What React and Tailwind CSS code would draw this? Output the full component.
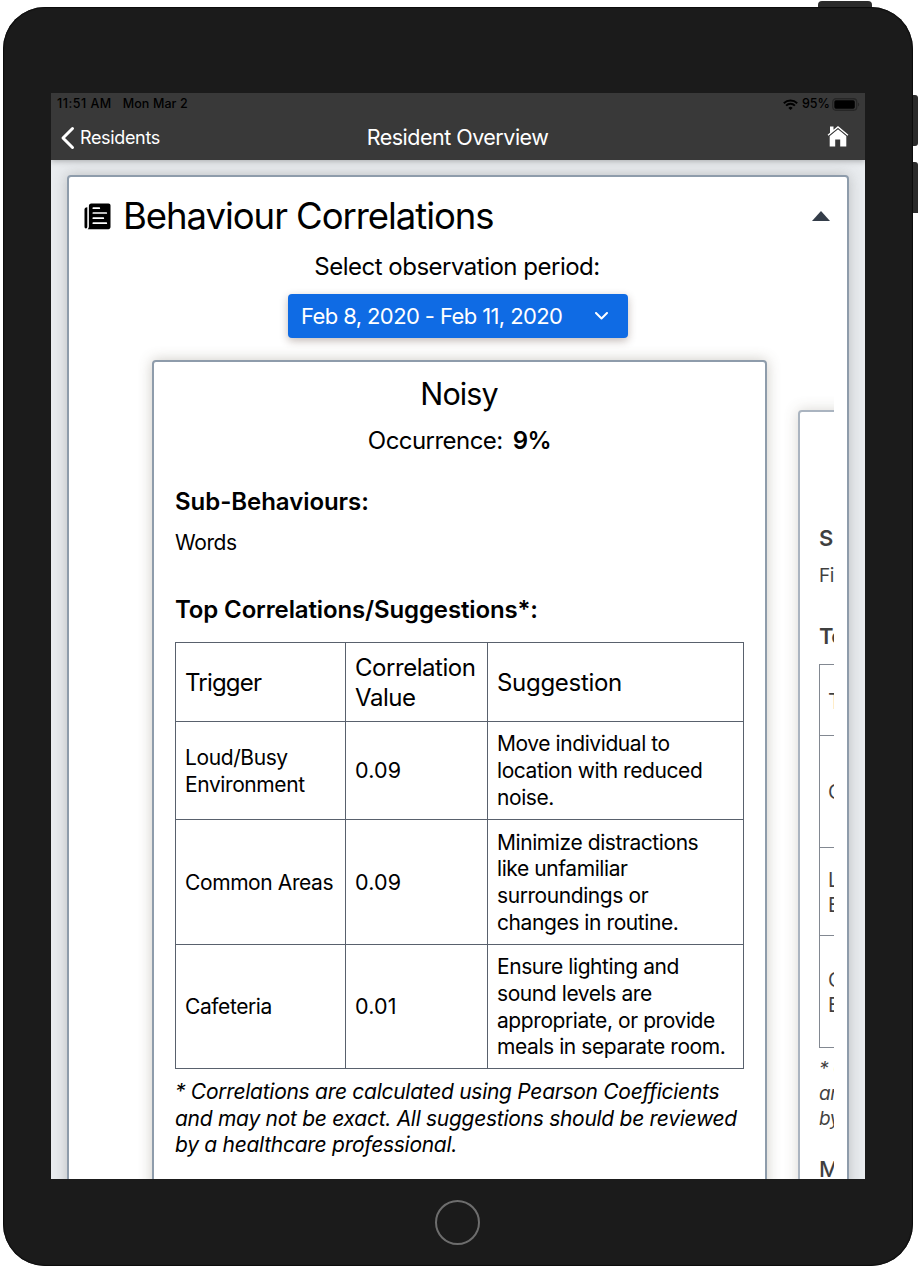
const rows = [
  { h: "h-[98px]", t: ["Loud/Busy", "Environment"], v: "0.09", s: ["Move individual to", "location with reduced", "noise."] },
  { h: "h-[125px]", t: ["Common Areas"], v: "0.09", s: ["Minimize distractions", "like unfamiliar", "surroundings or", "changes in routine."] },
  { h: "h-[124px]", t: ["Cafeteria"], v: "0.01", s: ["Ensure lighting and", "sound levels are", "appropriate, or provide", "meals in separate room."] },
];

const nextRows = [
  { h: "h-[71px]", t: ["T"], f: "text-[22px]" },
  { h: "h-[112px]", t: ["C"], f: "text-[20px]" },
  { h: "h-[88px]", t: ["L", "E"], f: "text-[20px]" },
  { h: "h-[112px]", t: ["C", "E"], f: "text-[20px]" },
];

function Lines({ lines }) {
  return lines.map((l) => (
    <span key={l} className="block whitespace-nowrap">{l}</span>
  ));
}

function StatusBar() {
  return (
    <div className="flex h-[22px] items-center justify-between pl-[6px] pr-[5px] text-[12.5px] font-medium text-black">
      <div className="flex gap-[11px]">
        <span className="tracking-[0.5px]">11:51 AM</span>
        <span className="tracking-[0.1px]">Mon Mar 2</span>
      </div>
      <div className="flex items-center">
        <svg className="mr-[4px] h-[11px] w-[15px]" viewBox="0 0 15 11" fill="none" stroke="#000" strokeWidth="1.9">
          <path d="M0.8 4.2a9.6 9.6 0 0 1 13.4 0M3.1 6.6a6.3 6.3 0 0 1 8.8 0" />
          <path d="M7.5 11L5.4 8.9a3 3 0 0 1 4.200 0z" fill="#000" stroke="none" />
        </svg>
        <span>95%</span>
        <svg className="ml-[2px] h-[13px] w-[28px]" viewBox="0 0 28 13">
          <rect x="0.75" y="0.75" width="24" height="11.500" rx="3.200" fill="none" stroke="#262626" strokeWidth="1.3" />
          <rect x="2.300" y="2.300" width="20.5" height="8.400" rx="1.6" fill="#000" />
          <path d="M26 4.500v4c1.6-.5 1.6-3.500 0-4z" fill="#262626" />
        </svg>
      </div>
    </div>
  );
}

function NavBar() {
  return (
    <div className="grid h-[45px] grid-cols-3 items-center pl-[9px] pr-[16px] text-white">
      <div className="flex items-center gap-[5px]">
        <svg className="h-[24px] w-[15px]" viewBox="0 0 15 24" fill="none" stroke="#fff" strokeWidth="3" strokeLinecap="round" strokeLinejoin="round">
          <path d="M12.500 2.5L3 12l9.500 9.5" />
        </svg>
        <span className="text-[18px] tracking-[-0.35px]">Residents</span>
      </div>
      <span className="whitespace-nowrap pl-[6px] text-center text-[21.5px] tracking-[-0.5px]">Resident Overview</span>
      <svg className="mb-[4px] h-[22px] w-[22px] justify-self-end" viewBox="0 0 22 22" fill="#fff">
        <path d="M11 4.300L2.700 11v10.500h5.500v-7h5v7h6.100V11z" />
        <path d="M0.600 9.800L3 7.800V1.500h3.500v3.200L11 0.900l10.400 8.900-.9 1L11 2.900 1.500 10.800z" />
        <path d="M2 11L11 3.500l9 7.500" fill="none" stroke="#393939" strokeWidth="0.600" />
      </svg>
    </div>
  );
}

function PaperIcon() {
  return (
    <svg className="h-[27px] w-[27px]" viewBox="0 0 27 27">
      <path d="M3.300 4.200v19.300c0 1.200-.5 2-1.400 2C1 25.500.500 24.700.500 23.500V6.500c0-1.300.8-2.300 2.800-2.300z" />
      <path d="M7.300.600h17.200c1.200 0 2 .8 2 2v21.500c0 1.200-.8 2.100-2 2.100H3.600c.8-.6 1.300-1.500 1.300-2.700V3c0-1.500.9-2.400 2.400-2.400z" />
      <path d="M9.300 5.200h6M9.300 10h13M9.300 15.200h10M9.300 20.200h13" stroke="#fff" strokeWidth="1.700" strokeLinecap="round" />
    </svg>
  );
}

function BehaviourCard() {
  return (
    <div className="h-[900px] w-[615px] shrink-0 rounded-[4px] border-2 border-[#8e9cab] bg-white px-[21px] pt-[13px] shadow-[0_0_14px_rgba(90,80,60,0.3)]">
      <h2 className="pr-[1px] text-center text-[30.5px] leading-[38px] tracking-[-0.9px]">Noisy</h2>
      <p className="mt-[13px] text-center text-[24px] leading-[30px] tracking-[-0.55px]">
        Occurrence: <b className="ml-[4px] font-semibold">9%</b>
      </p>
      <h3 className="mt-[31px] text-[24px] font-semibold leading-[30px] tracking-[-0.05px]">Sub-Behaviours:</h3>
      <p className="mt-[12px] text-[21px] leading-[28px] tracking-[-0.4px]">Words</p>
      <h3 className="mt-[38px] text-[24px] font-semibold leading-[30px] tracking-[-0.13px]">Top Correlations/Suggestions*:</h3>
      <div className="mt-[17px] w-[569px] border-b border-r border-[#59616d]">
        <div className="flex h-[79px] text-[24px] leading-[30px] tracking-[-0.45px]">
          <div className="flex w-[170px] items-center border-l border-t border-[#59616d] pl-[9px] pt-[2px] tracking-[-0.8px]">Trigger</div>
          <div className="flex w-[142px] flex-col justify-center border-l border-t border-[#59616d] pl-[9px] pt-[2px]"><Lines lines={["Correlation", "Value"]} /></div>
          <div className="flex flex-1 items-center border-l border-t border-[#59616d] pl-[9px] pt-[2px] tracking-[-0.3px]">Suggestion</div>
        </div>
        {rows.map((r) => (
          <div key={r.t[0]} className={"flex text-[21px] leading-[26.7px] tracking-[-0.42px] " + r.h}>
            <div className="flex w-[170px] flex-col justify-center border-l border-t border-[#59616d] pl-[9px] pt-[2px] tracking-[-0.4px]"><Lines lines={r.t} /></div>
            <div className="flex w-[142px] items-center border-l border-t border-[#59616d] pl-[9px] text-[21.5px] tracking-[0.2px]">{r.v}</div>
            <div className="flex flex-1 flex-col justify-center border-l border-t border-[#59616d] pl-[9px] pt-[2px]"><Lines lines={r.s} /></div>
          </div>
        ))}
      </div>
      <p className="mt-[10px] text-[21px] italic leading-[26.7px] tracking-[-0.28px]">
        <Lines lines={["* Correlations are calculated using Pearson Coefficients", "and may not be exact. All suggestions should be reviewed", "by a healthcare professional."]} />
      </p>
    </div>
  );
}

function NextCard() {
  return (
    <div className="ml-[31px] mt-[50px] h-[850px] w-[553px] shrink-0 rounded-[4px] border-2 border-[#8e9cab] bg-white pl-[19px] opacity-75 shadow-[0_0_14px_rgba(90,80,60,0.3)]">
      <h3 className="mt-[112px] text-[22px] font-semibold leading-[28px]">S</h3>
      <p className="mt-[11px] text-[19px] leading-[26px] tracking-[-0.5px]">Fi</p>
      <h3 className="mt-[35px] text-[22px] font-semibold leading-[24px] tracking-[-0.5px]">To</h3>
      <div className="mt-[16px] border-b border-l border-[#59616d]">
        {nextRows.map((r, i) => (
          <div key={i} className={"flex flex-col justify-center border-t border-[#59616d] pl-[8px] pt-[2px] leading-[25px] " + r.h + " " + r.f}>
            <Lines lines={r.t} />
          </div>
        ))}
      </div>
      <p className="mt-[8px] text-[19px] italic leading-[25px] tracking-[-0.4px]"><Lines lines={["* C", "an", "by"]} /></p>
      <h3 className="mt-[24px] text-[22px] font-medium leading-[28px]">M</h3>
    </div>
  );
}

export default function App() {
  return (
    <div className="h-[1267px] w-[921px] overflow-hidden bg-white pl-[3px] pt-[7px] font-['Inter',sans-serif] text-black">
      <div className="relative h-[1259px] w-[910px] rounded-[42px] bg-[#1b1b1b] pl-[48px] pt-[86px] shadow-[inset_0_0_1px_1px_#0c0c0c]">
        <div className="absolute left-[815px] top-[-6px] h-[6px] w-[54px] rounded-t-[4px] bg-[#2b2b2b]" />
        <div className="absolute left-[910px] top-[88px] h-[51px] w-[5px] rounded-r-[3px] bg-[#2b2b2b]" />
        <div className="absolute left-[910px] top-[155px] h-[51px] w-[5px] rounded-tr-[3px] bg-[#2b2b2b]" />

        <div className="h-[1086px] w-[814px] overflow-hidden bg-[#e9ecef]">
          <header className="relative h-[67px] bg-[#393939] shadow-[0_1px_6px_rgba(0,0,0,0.3)]">
            <StatusBar />
            <NavBar />
          </header>
          <main className="ml-[16px] mt-[15px] h-[1100px] w-[782px] rounded-[4px] border-2 border-[#8e9cab] bg-white shadow-[0_0_14px_rgba(80,80,80,0.3)]">
            <div className="flex h-[78px] items-center pl-[15px] pr-[17px]">
              <PaperIcon />
              <h1 className="ml-[12px] flex-1 whitespace-nowrap text-[36.5px] tracking-[-1.05px]">Behaviour Correlations</h1>
              <svg className="h-[10px] w-[18px]" viewBox="0 0 18 10"><path d="M0 10L9 0l9 10z" fill="#343d49" /></svg>
            </div>
            <p className="pr-[2px] text-center text-[24px] leading-[24px] tracking-[-0.5px]">Select observation period:</p>
            <button className="mx-auto mt-[15px] flex h-[44px] w-[340px] items-center justify-between rounded-[4px] bg-[#0f6be4] pl-[13px] pr-[20px] text-[22px] tracking-[-0.6px] text-white shadow-[0_3px_8px_rgba(60,30,20,0.3)]">
              <span>Feb 8, 2020 - Feb 11, 2020</span>
              <svg className="h-[8px] w-[13px]" viewBox="0 0 13 8" fill="none" stroke="#fff" strokeWidth="2" strokeLinecap="round" strokeLinejoin="round"><path d="M1 1l5.500 5.500L12 1" /></svg>
            </button>
            <div className="mr-[13px] h-[860px] overflow-hidden pl-[83px] pt-[22px]">
              <div className="flex">
                <BehaviourCard />
                <NextCard />
              </div>
            </div>
          </main>
        </div>
        <div className="ml-[384px] mt-[21px] h-[45px] w-[45px] rounded-full border-2 border-[#6d6d6d]" />
      </div>
    </div>
  );
}
